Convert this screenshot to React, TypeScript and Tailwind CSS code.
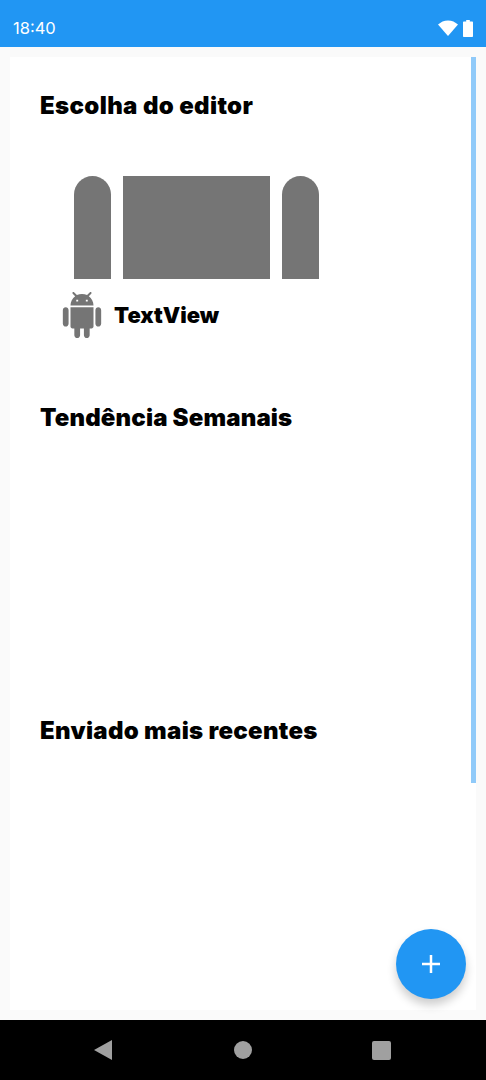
const fontClass = "font-['Inter','Liberation_Sans',sans-serif]";

const headingClass = `${fontClass} h-8 text-[24px] leading-8 font-black text-black`;

const ANDROID_PATH =
  'M6 18c0 .55.45 1 1 1h1v3.5c0 .83.67 1.5 1.5 1.5s1.5-.67 1.5-1.5V19h2v3.5c0 .83.67 1.5 1.5 1.5s1.5-.67 1.5-1.5V19h1c.55 0 1-.45 1-1V8H6v10zM3.5 8C2.67 8 2 8.67 2 9.5v7c0 .83.67 1.5 1.5 1.5S5 17.33 5 16.5v-7C5 8.67 4.33 8 3.5 8zm17 0c-.83 0-1.5.67-1.5 1.5v7c0 .83.67 1.5 1.5 1.5s1.5-.67 1.5-1.5v-7c0-.83-.67-1.5-1.5-1.5zm-4.97-5.84l1.3-1.3c.2-.2.2-.51 0-.71-.2-.2-.51-.2-.71 0l-1.48 1.48C13.85 1.23 12.95 1 12 1c-.96 0-1.86.23-2.66.63L7.85.15c-.2-.2-.51-.2-.71 0-.2.2-.2.51 0 .71l1.31 1.31C6.97 3.26 6 5.01 6 7h12c0-1.99-.97-3.75-2.47-4.84zM10 5H9V4h1v1zm5 0h-1V4h1v1z';

const StatusBar = () => (
  <div className="flex h-[47px] shrink-0 items-center justify-between bg-[#2196f3] pt-[9px] pr-[13px] pl-[13px] text-white">
    <span className={`${fontClass} text-[16.5px] leading-[22px] font-normal`}>18:40</span>
    <div className="flex items-center gap-[5px]">
      <svg width="20" height="16" viewBox="0 0 20 16" fill="white">
        <path d="M0 4.500C2.700 2 6.200 0.400 10 0.400s7.300 1.600 10 4.100L10 16z" />
      </svg>
      <svg width="10" height="17" viewBox="0 0 10 17" fill="white">
        <path d="M3.200 0h3.600v1.500H9c.6 0 1 .4 1 1V16c0 .6-.4 1-1 1H1c-.6 0-1-.4-1-1V2.500c0-.6.4-1 1-1h2.200z" />
      </svg>
    </div>
  </div>
);

const EditorPreview = () => (
  <div className="mt-[54px] flex gap-3 pl-[34px] blur-[0.5px]">
    <div className="h-[103px] w-[37px] rounded-t-[18.5px] bg-[#757575]" />
    <div className="h-[103px] w-[147px] bg-[#757575]" />
    <div className="h-[103px] w-[37px] rounded-t-[18.5px] bg-[#757575]" />
  </div>
);

const EditorLabel = () => (
  <div className="mt-[13px] flex items-center gap-[9px] pl-[19px]">
    <svg width="46" height="46" viewBox="0 0 24 24" fill="#757575">
      <path d={ANDROID_PATH} />
    </svg>
    <span className={`${fontClass} text-[22px] leading-7 font-black text-black`}>TextView</span>
  </div>
);

const NavBar = () => (
  <div className="flex h-[60px] shrink-0 items-center bg-black pl-[94px]">
    <svg width="18" height="20" viewBox="0 0 18 20" fill="#a0a0a0">
      <path d="M18 0v20L0 10z" />
    </svg>
    <div className="ml-[122px] h-[18px] w-[18px] rounded-full bg-[#a0a0a0]" />
    <div className="ml-[120px] h-[19px] w-[19px] rounded-[2px] bg-[#a0a0a0]" />
  </div>
);

export default function App() {
  return (
    <div className="relative flex h-[1080px] w-[486px] flex-col overflow-hidden bg-[#fafafa]">
      <StatusBar />
      <main className="relative mx-[10px] my-[10px] flex-1 bg-white pt-[33px] pl-[30px]">
        <h2 className={`${headingClass} tracking-[0.35px]`}>Escolha do editor</h2>
        <EditorPreview />
        <EditorLabel />
        <h2 className={`${headingClass} mt-[64px] tracking-[0.15px]`}>Tendência Semanais</h2>
        <h2 className={`${headingClass} mt-[281px] tracking-[0.3px]`}>Enviado mais recentes</h2>
        <div className="absolute top-0 right-0 h-[726px] w-[5px] bg-[#90caf9]" />
      </main>
      <NavBar />
      <button className="absolute top-[929px] left-[396px] flex h-[70px] w-[70px] items-center justify-center rounded-full bg-[#2196f3] shadow-[0_6px_10px_rgba(0,0,0,0.2)]">
        <svg width="18" height="18" viewBox="0 0 18 18" stroke="white" strokeWidth="2.500" fill="none">
          <path d="M9 0v18M0 9h18" />
        </svg>
      </button>
    </div>
  );
}
